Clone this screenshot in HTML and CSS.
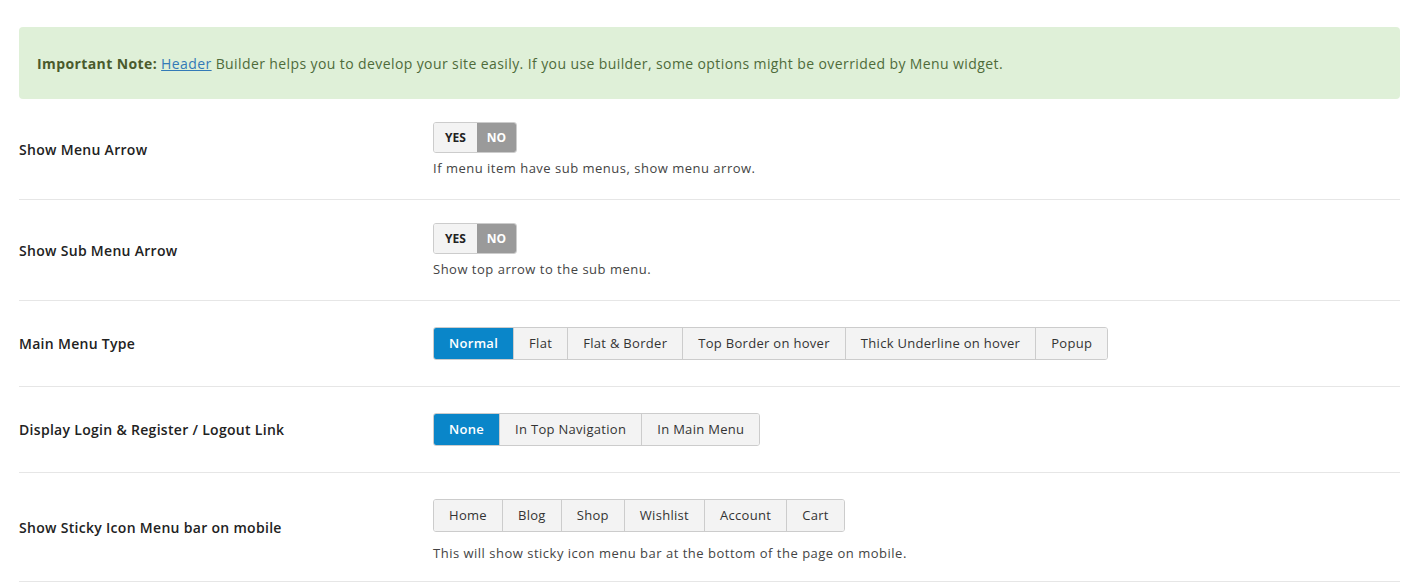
FILE: index.html
```html
<!DOCTYPE html>
<html lang="en">
<head>
  <meta charset="UTF-8">
  <title>Menu Options</title>
  <link rel="stylesheet" href="styles.css">
</head>
<body>
  <div class="panel">
    <div class="note">
      <strong>Important Note:</strong> <a href="#">Header</a> Builder helps you to develop your site easily. If you use builder, some options might be overrided by Menu widget.
    </div>

    <div class="row">
      <div class="label">Show Menu Arrow</div>
      <div class="field">
        <div class="toggle">
          <span class="opt">YES</span><span class="opt on">NO</span>
        </div>
        <p class="desc">If menu item have sub menus, show menu arrow.</p>
      </div>
    </div>

    <div class="row">
      <div class="label">Show Sub Menu Arrow</div>
      <div class="field">
        <div class="toggle">
          <span class="opt">YES</span><span class="opt on">NO</span>
        </div>
        <p class="desc">Show top arrow to the sub menu.</p>
      </div>
    </div>

    <div class="row">
      <div class="label">Main Menu Type</div>
      <div class="field">
        <div class="btns">
          <span class="btn active">Normal</span><span class="btn">Flat</span><span class="btn">Flat &amp; Border</span><span class="btn">Top Border on hover</span><span class="btn">Thick Underline on hover</span><span class="btn">Popup</span>
        </div>
      </div>
    </div>

    <div class="row">
      <div class="label">Display Login &amp; Register / Logout Link</div>
      <div class="field">
        <div class="btns">
          <span class="btn active">None</span><span class="btn">In Top Navigation</span><span class="btn">In Main Menu</span>
        </div>
      </div>
    </div>

    <div class="row">
      <div class="label">Show Sticky Icon Menu bar on mobile</div>
      <div class="field">
        <div class="btns">
          <span class="btn">Home</span><span class="btn">Blog</span><span class="btn">Shop</span><span class="btn">Wishlist</span><span class="btn">Account</span><span class="btn">Cart</span>
        </div>
        <p class="desc">This will show sticky icon menu bar at the bottom of the page on mobile.</p>
      </div>
    </div>
  </div>
</body>
</html>
```

FILE: styles.css
```css
body {
  margin: 0;
  padding: 27px 9px 0 19px;
  background: #fff;
  font-family: "Open Sans", Arial, sans-serif;
  color: #333;
}
.note {
  background: #dff0d8;
  color: #4e6b3a;
  border-radius: 4px;
  padding: 0 18px;
  height: 72px;
  display: flex;
  align-items: center;
  font-size: 14px;
  letter-spacing: 0.4px;
}
.note strong {
  color: #4a5a2c;
  margin-right: 4px;
}
.note a {
  color: #337ab7;
  margin-right: 4px;
}
.row {
  display: flex;
  align-items: center;
  padding: 26px 0;
  border-bottom: 1px solid #e6e6e6;
}
.label {
  width: 414px;
  flex-shrink: 0;
  font-size: 14px;
  font-weight: 600;
  color: #222;
  letter-spacing: 0.3px;
}
.field {
  flex: 1;
}
.desc {
  margin: 5px 0 -5px;
  font-size: 13px;
  line-height: 20px;
  color: #444;
  letter-spacing: 0.5px;
}
.btns + .desc {
  margin: 11px 0 -8px;
}
.toggle {
  display: inline-flex;
  margin-top: -3px;
  border: 1px solid #ccc;
  border-radius: 3px;
  overflow: hidden;
}
.toggle .opt {
  font-size: 12px;
  font-weight: 700;
  line-height: 29px;
  padding: 0 11px;
  background: #f3f3f3;
  color: #222;
}
.toggle .opt.on {
  padding: 0 10px;
  background: #9a9a9a;
  color: #fff;
}
.btns {
  display: inline-flex;
  border: 1px solid #ccc;
  border-radius: 3px;
  overflow: hidden;
}
.btn {
  font-size: 13px;
  line-height: 31px;
  padding: 0 15px;
  background: #f3f3f3;
  color: #333;
  border-left: 1px solid #ccc;
  letter-spacing: 0.3px;
}
.btn:first-child {
  border-left: none;
}
.btn.active {
  background: #0a86c9;
  color: #fff;
  font-weight: 600;
}
```
